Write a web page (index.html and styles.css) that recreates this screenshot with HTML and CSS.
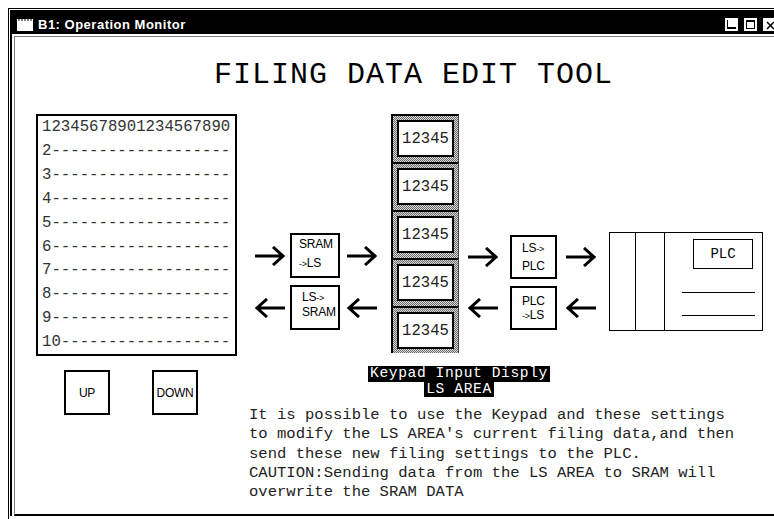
FILE: index.html
```html
<html>
  <head>
    <link rel="stylesheet" href="styles.css">
  </head>
  <body>
    <div class="window">
      <div class="frame">
        <div class="titlebar">
          <svg class="app-icon" width="16" height="12" viewBox="0 0 16 12">
            <rect x="0" y="0" width="16" height="12" fill="#fff"/>
            <path d="M1 1h2M4 1h2M7 1h2M10 1h2M13 1h2" stroke="#000" stroke-width="1"/>
          </svg>
          <span class="title">B1: Operation Monitor</span>
          <span class="ctrls">
            <span class="ctrl ctrl-min"><i></i></span>
            <span class="ctrl ctrl-max"><i></i></span>
            <span class="ctrl ctrl-close">
              <svg width="11" height="11" viewBox="0 0 11 11"><path d="M2 2L9 9M9 2L2 9" stroke="#000" stroke-width="1.5"/></svg>
            </span>
          </span>
        </div>
        <div class="client">
          <h1 class="heading">FILING DATA EDIT TOOL</h1>
          <div class="panel">
            <div class="left">
              <div class="listbox">
                <div>12345678901234567890</div>
                <div>2-------------------</div>
                <div>3-------------------</div>
                <div>4-------------------</div>
                <div>5-------------------</div>
                <div>6-------------------</div>
                <div>7-------------------</div>
                <div>8-------------------</div>
                <div>9-------------------</div>
                <div>10------------------</div>
              </div>
              <div class="buttons">
                <div class="btn">UP</div>
                <div class="btn">DOWN</div>
              </div>
            </div>
            <div class="right">
              <div class="diagram">
                <div class="link link-sram">
                  <svg class="arrow" width="30" height="20" viewBox="0 0 30 20"><path d="M0 10H28M18 1L28 10L18 19"/></svg>
                  <div class="box box-a">SRAM<span><span class="to">-&gt;</span>LS</span></div>
                  <svg class="arrow" width="30" height="20" viewBox="0 0 30 20"><path d="M0 10H28M18 1L28 10L18 19"/></svg>
                  <svg class="arrow" width="30" height="20" viewBox="0 0 30 20"><path d="M30 10H2M12 1L2 10L12 19"/></svg>
                  <div class="box box-b"><span>LS<span class="to">-&gt;</span></span>SRAM</div>
                  <svg class="arrow" width="30" height="20" viewBox="0 0 30 20"><path d="M30 10H2M12 1L2 10L12 19"/></svg>
                </div>
                <div class="keypad">
                  <div class="cell"><div class="cell-in">12345</div></div>
                  <div class="cell"><div class="cell-in">12345</div></div>
                  <div class="cell"><div class="cell-in">12345</div></div>
                  <div class="cell"><div class="cell-in">12345</div></div>
                  <div class="cell"><div class="cell-in">12345</div></div>
                </div>
                <div class="link link-plc">
                  <svg class="arrow" width="30" height="20" viewBox="0 0 30 20"><path d="M0 10H28M18 1L28 10L18 19"/></svg>
                  <div class="box box-c"><span>LS<span class="to">-&gt;</span></span>PLC</div>
                  <svg class="arrow" width="30" height="20" viewBox="0 0 30 20"><path d="M0 10H28M18 1L28 10L18 19"/></svg>
                  <svg class="arrow" width="30" height="20" viewBox="0 0 30 20"><path d="M30 10H2M12 1L2 10L12 19"/></svg>
                  <div class="box box-d">PLC<span><span class="to">-&gt;</span>LS</span></div>
                  <svg class="arrow" width="30" height="20" viewBox="0 0 30 20"><path d="M30 10H2M12 1L2 10L12 19"/></svg>
                </div>
                <div class="plc">
                  <div class="plc-col"></div>
                  <div class="plc-col"></div>
                  <div class="plc-main">
                    <div class="plc-label">PLC</div>
                    <div class="plc-line"></div>
                    <div class="plc-line"></div>
                  </div>
                </div>
              </div>
              <div class="labels">
                <span>Keypad Input Disply</span>
                <span>LS AREA</span>
              </div>
              <p class="note">It is possible to use the Keypad and these settings<br>to modify the LS AREA's current filing data,and then<br>send these new filing settings to the PLC.<br>CAUTION:Sending data from the LS AREA to SRAM will<br>overwrite the SRAM DATA</p>
            </div>
          </div>
        </div>
      </div>
    </div>
  </body>
</html>
```

FILE: styles.css
```css
body {
  margin: 0;
  background: #fff;
  width: 774px;
  height: 519px;
  overflow: hidden;
  font-family: "Liberation Mono", "Courier New", monospace;
  color: #000;
}
.window {
  margin: 8px 0 0 8px;
  width: 790px;
  height: 511px;
  box-sizing: border-box;
  border-left: 1px solid #000;
  border-top: 1px solid #000;
  padding: 1px 0 0 1px;
}
.frame {
  border-left: 2px solid #000;
  border-top: 1px solid #000;
}
.titlebar {
  display: flex;
  align-items: center;
  height: 23px;
  box-sizing: border-box;
  padding: 4px 0 0 5px;
  background: #000;
  color: #fff;
  font-family: "Liberation Sans", Arial, sans-serif;
}
.app-icon {
  display: block;
}
.title {
  margin-left: 5px;
  font-size: 13px;
  font-weight: bold;
  letter-spacing: 0.5px;
}
.ctrls {
  display: flex;
  gap: 6px;
  margin-left: auto;
  margin-right: 22px;
}
.ctrl {
  display: block;
  width: 13px;
  height: 13px;
  box-sizing: border-box;
  padding: 1px;
  background: #fff;
  border: 1px solid #fff;
}
.ctrl i {
  display: block;
  height: 100%;
  box-sizing: border-box;
}
.ctrl-min i {
  border-left: 1px solid #000;
  border-bottom: 2px solid #000;
}
.ctrl-max i {
  border: 1px solid #000;
  border-top-width: 2px;
}
.ctrl-close svg {
  display: block;
}
.client {
  margin: 2px 0 0 2px;
  height: 480px;
  box-sizing: border-box;
  border-left: 1px solid #808080;
  border-top: 1px solid #808080;
  border-bottom: 2px solid #000;
}
.heading {
  margin: 20px 0 0;
  padding-left: 199px;
  font-size: 30px;
  font-weight: normal;
  letter-spacing: 1px;
  line-height: 36px;
}
.panel {
  display: flex;
  margin-top: 21px;
}
.left {
  padding-left: 21px;
}
.listbox {
  width: 201px;
  height: 242px;
  box-sizing: border-box;
  border: 2px solid #000;
  padding-left: 4px;
  font-size: 15.7px;
  line-height: 23.9px;
  color: #333;
  overflow: hidden;
  white-space: nowrap;
}
.buttons {
  display: flex;
  gap: 42px;
  margin: 14px 0 0 28px;
}
.btn {
  width: 46px;
  height: 45px;
  box-sizing: border-box;
  border: 2px solid #000;
  display: flex;
  align-items: center;
  justify-content: center;
  font-family: "Liberation Sans", Arial, sans-serif;
  font-size: 12px;
  letter-spacing: -0.3px;
}
.right {
  margin-left: 12px;
}
.diagram {
  display: flex;
  align-items: flex-start;
  padding-left: 6px;
}
.link {
  display: grid;
  grid-template-columns: 30px auto 30px;
  align-items: center;
}
.link-sram {
  grid-template-rows: 45px 45px;
  row-gap: 7px;
  column-gap: 5px;
  margin-top: 119px;
}
.link-sram .box {
  margin-right: 2px;
}
.link-plc {
  grid-template-rows: 44px 44px;
  row-gap: 7px;
  column-gap: 9px;
  margin: 121px 0 0 9px;
}
.link-plc .box {
  margin-left: 3px;
}
.arrow {
  display: block;
}
.arrow path {
  fill: none;
  stroke: #000;
  stroke-width: 3;
}
.box {
  width: 50px;
  height: 100%;
  box-sizing: border-box;
  border: 2px solid #000;
  display: flex;
  flex-direction: column;
  justify-content: center;
  font-family: "Liberation Sans", Arial, sans-serif;
  font-size: 12px;
  letter-spacing: -0.2px;
}
.box-a {
  line-height: 19px;
  padding: 0 0 2px 7px;
}
.box-b {
  line-height: 14px;
  padding: 0 0 6px 10px;
}
.box-c {
  width: 47px;
  line-height: 17px;
  padding-left: 10px;
}
.box-d {
  width: 47px;
  line-height: 14px;
  padding-left: 10px;
}
.to {
  font-size: 9px;
}
.keypad {
  margin-left: 14px;
  width: 68px;
}
.cell {
  height: 48px;
  box-sizing: border-box;
  border-top: 2px solid #000;
  border-left: 2px solid #000;
  border-right: 1px solid #444;
  padding: 4px 4px 5px;
  background: repeating-conic-gradient(#6e6e6e 0 25%, #d6d6d6 0 50%) 0 0 / 2px 2px;
}
.cell:last-child {
  height: 47px;
  padding-bottom: 4px;
}
.cell-in {
  height: 100%;
  box-sizing: border-box;
  border: 2px solid #000;
  background: #fff;
  display: flex;
  align-items: center;
  justify-content: center;
  font-size: 15.6px;
  color: #222;
}
.plc {
  display: grid;
  grid-template-columns: 26px 29px 1fr;
  width: 154px;
  height: 99px;
  box-sizing: border-box;
  margin: 118px 0 0 13px;
  border: 1px solid #000;
}
.plc-col {
  border-right: 1px solid #000;
}
.plc-main {
  display: flex;
  flex-direction: column;
}
.plc-label {
  width: 60px;
  height: 30px;
  box-sizing: border-box;
  margin: 6px 0 0 28px;
  border: 1px solid #000;
  display: flex;
  align-items: center;
  justify-content: center;
  font-size: 14px;
}
.plc-line {
  width: 73px;
  height: 1px;
  margin: 23px 0 0 17px;
  background: #000;
}
.plc-line + .plc-line {
  margin-top: 22px;
}
.labels {
  display: flex;
  flex-direction: column;
  align-items: center;
  width: 182px;
  margin: 13px 0 0 119px;
  font-size: 14.6px;
  letter-spacing: 0.6px;
  line-height: 15.5px;
}
.labels span {
  display: block;
  height: 15.5px;
  background: #000;
  color: #fff;
  padding: 0 2px;
}
.note {
  margin: 9px 0 0;
  font-size: 15.55px;
  line-height: 19.3px;
  color: #222;
  white-space: nowrap;
}
```
